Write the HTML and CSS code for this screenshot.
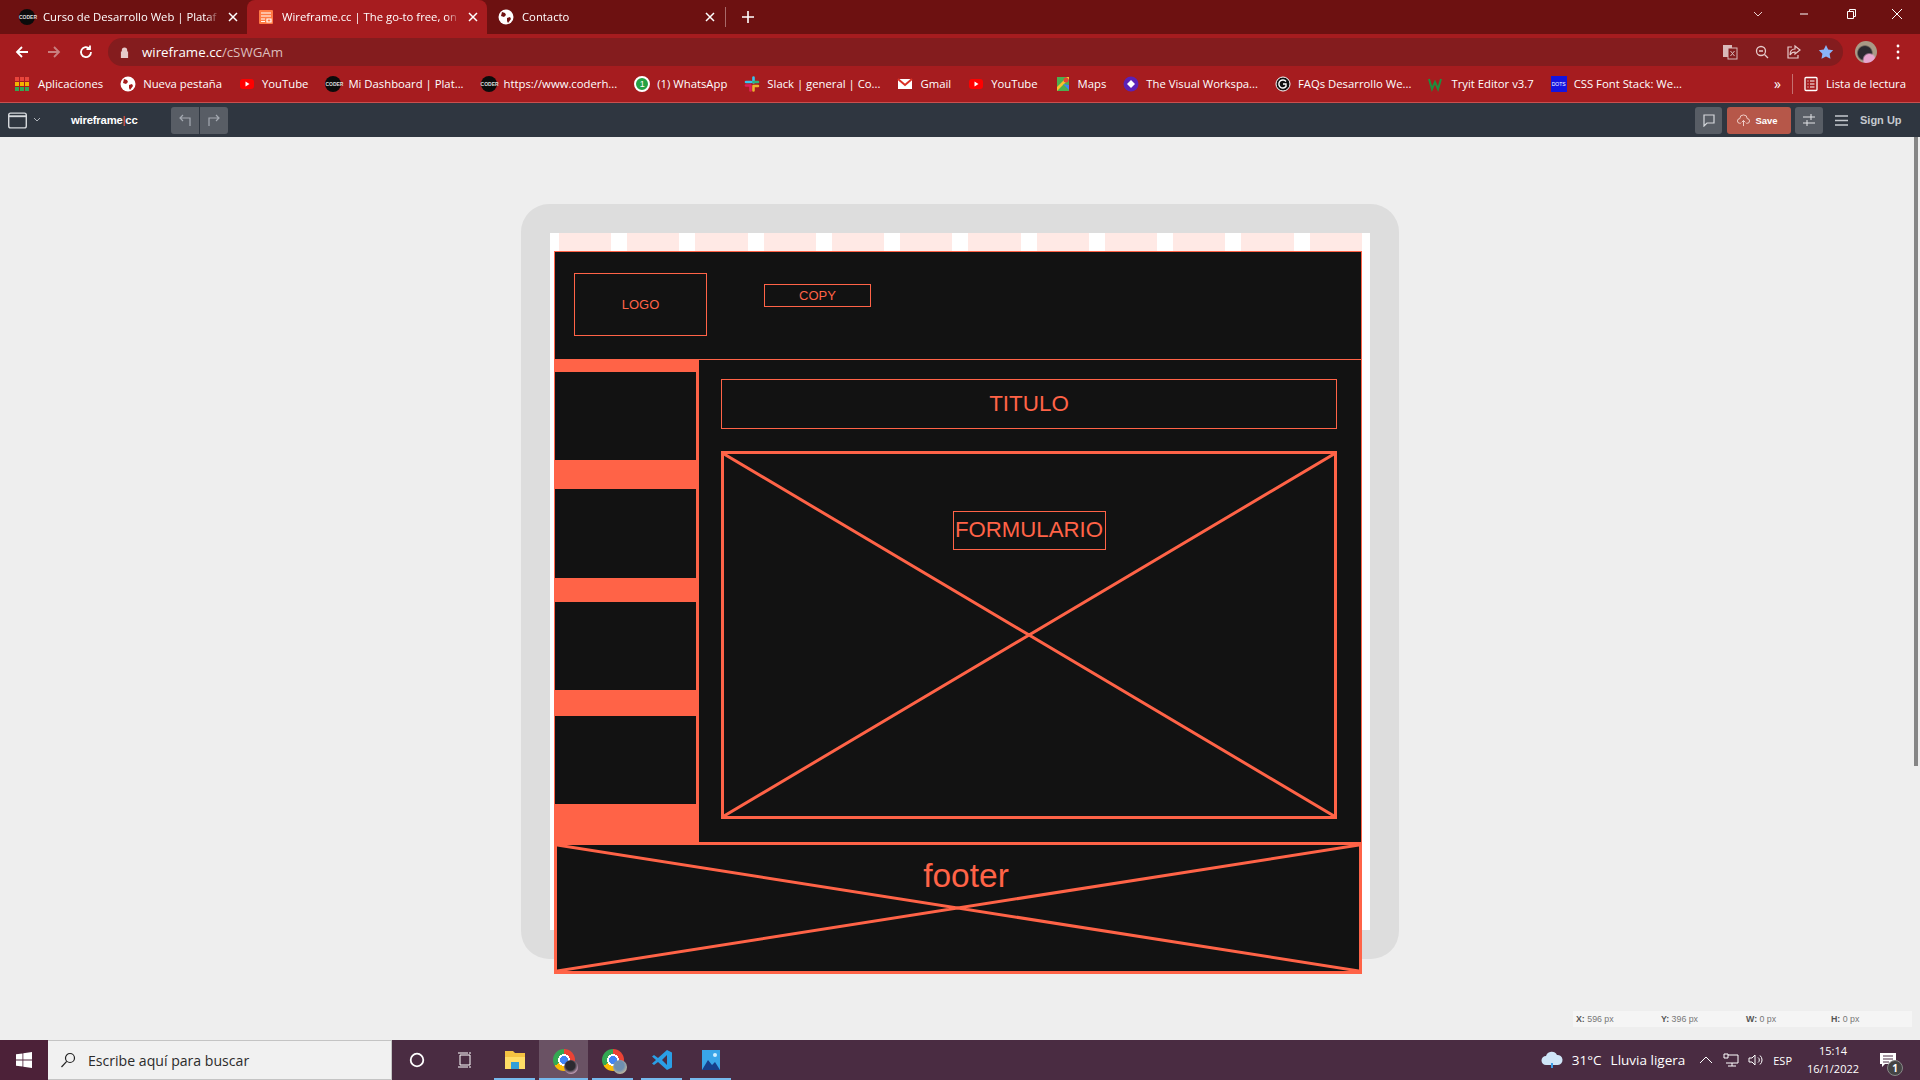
FILE: index.html
```html
<!DOCTYPE html>
<html lang="en">
<head>
    <meta charset="UTF-8">
    <title>Wireframe.cc</title>
    <link rel="stylesheet" href="styles.css">
</head>
<body>

<div class="tabstrip">
    <div class="tab tab-first">
        <span class="fav fav-coder">CODER</span>
        <span class="tab-title">Curso de Desarrollo Web | Plataf</span>
        <svg class="tab-x" viewBox="0 0 10 10"><path d="M1 1l8 8M9 1L1 9"/></svg>
    </div>
    <div class="tab tab-active">
        <svg class="fav-svg" viewBox="0 0 16 16"><rect x="1" y="1" width="14" height="14" rx="1" fill="#ff7a45"/><path d="M3 4h10M3 7h10M3 10h4M3 12.5h4M9 10h4v3H9z" stroke="#fff" stroke-width="1.2" fill="none"/></svg>
        <span class="tab-title">Wireframe.cc | The go-to free, on</span>
        <svg class="tab-x" viewBox="0 0 10 10"><path d="M1 1l8 8M9 1L1 9"/></svg>
    </div>
    <div class="tab tab-last">
        <svg class="fav-svg" viewBox="0 0 16 16"><circle cx="8" cy="8" r="7.5" fill="#fff"/><path d="M4 3l3 1 1 2-2 2-3-1zM9 9l3-1 1 2-3 4-1-2z" fill="#6f1212"/></svg>
        <span class="tab-title">Contacto</span>
        <svg class="tab-x" viewBox="0 0 10 10"><path d="M1 1l8 8M9 1L1 9"/></svg>
    </div>
    <span class="tab-sep"></span>
    <svg class="tab-new" viewBox="0 0 12 12"><path d="M6 0v12M0 6h12"/></svg>
    <div class="win-btns">
        <svg viewBox="0 0 12 12"><path d="M2 4l4 4 4-4" stroke="#e8d0d0" fill="none"/></svg>
        <svg viewBox="0 0 12 12"><path d="M2 6h8" stroke="#fff" fill="none"/></svg>
        <svg viewBox="0 0 12 12"><path d="M2.5 3.5h6v7h-6zM4.500 3.500v-2h6v7h-2" stroke="#fff" fill="none"/></svg>
        <svg viewBox="0 0 12 12"><path d="M1 1l10 10M11 1L1 11" stroke="#fff" fill="none"/></svg>
    </div>
</div>

<div class="addressbar">
    <svg class="nav-ico" viewBox="0 0 16 16"><path d="M14 8H3M8 3L3 8l5 5" stroke="#fff" stroke-width="1.8" fill="none"/></svg>
    <svg class="nav-ico" viewBox="0 0 16 16"><path d="M2 8h11M8 3l5 5-5 5" stroke="#c98080" stroke-width="1.8" fill="none"/></svg>
    <svg class="nav-ico" viewBox="0 0 16 16"><path d="M13 8a5 5 0 1 1-1.500-3.500M12 1.500V5H8.500" stroke="#fff" stroke-width="1.8" fill="none"/></svg>
    <div class="omnibox">
        <svg class="lock" viewBox="0 0 10 12"><path d="M2 5V3.500a3 3 0 0 1 6 0V5h1v7H1V5z" fill="#e6caca"/></svg>
        <span class="url">wireframe.cc<span class="url-path">/cSWGAm</span></span>
        <div class="omni-icons">
            <svg viewBox="0 0 16 16"><rect x="1" y="1" width="9" height="12" fill="#d9b9b9"/><rect x="6" y="4" width="9" height="11" fill="#841c1e" stroke="#d9b9b9"/><path d="M8.500 7l4 5M12.500 7l-4 5" stroke="#d9b9b9"/></svg>
            <svg viewBox="0 0 16 16"><circle cx="7" cy="7" r="4.500" stroke="#e6caca" stroke-width="1.3" fill="none"/><path d="M10.500 10.500L14 14M5 7h4" stroke="#e6caca" stroke-width="1.3"/></svg>
            <svg viewBox="0 0 16 16"><path d="M6 3H2v11h10v-3M9 2l5 4-5 4V8c-3 0-4 1-5 3 0-4 2-6 5-6z" stroke="#e6caca" stroke-width="1.2" fill="none"/></svg>
            <svg viewBox="0 0 16 16"><path d="M8 1l2.200 4.600 5 .7-3.600 3.500.9 5L8 12.400l-4.500 2.400.9-5L.8 6.300l5-.7z" fill="#8ab4f8"/></svg>
        </div>
    </div>
    <span class="avatar"></span>
    <svg class="menu-dots" viewBox="0 0 4 16"><circle cx="2" cy="2" r="1.4" fill="#fff"/><circle cx="2" cy="8" r="1.4" fill="#fff"/><circle cx="2" cy="14" r="1.4" fill="#fff"/></svg>
</div>

<div class="bookmarks">
    <div class="bm bm-apps"><span class="apps"></span>Aplicaciones</div>
    <div class="bm"><svg class="fav-svg" viewBox="0 0 16 16"><circle cx="8" cy="8" r="7.5" fill="#fff"/><path d="M4 3l3 1 1 2-2 2-3-1zM9 9l3-1 1 2-3 4-1-2z" fill="#a61c1c"/></svg>Nueva pestaña</div>
    <div class="bm"><svg class="fav-svg" viewBox="0 0 16 16"><rect x="1" y="3" width="14" height="10" rx="3" fill="#f00"/><path d="M6.500 5.500v5l4-2.500z" fill="#fff"/></svg>YouTube</div>
    <div class="bm"><span class="fav fav-coder">CODER</span>Mi Dashboard | Plat...</div>
    <div class="bm"><span class="fav fav-coder">CODER</span>https://www.coderh...</div>
    <div class="bm"><span class="fav fav-wa">1</span>(1) WhatsApp</div>
    <div class="bm"><svg class="fav-svg" viewBox="0 0 16 16"><path d="M2 6h5M9.500 1.500v5" stroke="#36c5f0" stroke-width="2.6" stroke-linecap="round"/><path d="M9.500 6H14" stroke="#2eb67d" stroke-width="2.6" stroke-linecap="round"/><path d="M6.500 9.500v5" stroke="#e01e5a" stroke-width="2.6" stroke-linecap="round"/><path d="M2 9.500h4" stroke="#e01e5a" stroke-width="2.6" stroke-linecap="round"/><path d="M9.500 10H14M9.500 10v4.500" stroke="#ecb22e" stroke-width="2.6" stroke-linecap="round"/></svg>Slack | general | Co...</div>
    <div class="bm"><svg class="fav-svg" viewBox="0 0 16 16"><rect x="1" y="3" width="14" height="10" fill="#fff"/><path d="M1 3l7 6 7-6" stroke="#d93025" stroke-width="2" fill="none"/></svg>Gmail</div>
    <div class="bm"><svg class="fav-svg" viewBox="0 0 16 16"><rect x="1" y="3" width="14" height="10" rx="3" fill="#f00"/><path d="M6.500 5.500v5l4-2.500z" fill="#fff"/></svg>YouTube</div>
    <div class="bm"><svg class="fav-svg" viewBox="0 0 16 16"><rect x="2" y="1" width="12" height="14" fill="#4caf50"/><path d="M2 15L14 3V1h-2L2 11z" fill="#fbc02d"/><path d="M8 8l6 6V9z" fill="#4285f4"/><circle cx="11" cy="4" r="2.500" fill="#ea4335"/></svg>Maps</div>
    <div class="bm"><svg class="fav-svg" viewBox="0 0 16 16"><circle cx="8" cy="8" r="7.5" fill="#5b21b6"/><path d="M8 4l4 4-4 4-4-4z" fill="#fff"/></svg>The Visual Workspa...</div>
    <div class="bm"><svg class="fav-svg" viewBox="0 0 16 16"><circle cx="8" cy="8" r="7" fill="#111" stroke="#fff"/><path d="M11 5.500a4 4 0 1 0 0 5V8H8" stroke="#fff" stroke-width="1.4" fill="none"/></svg>FAQs Desarrollo We...</div>
    <div class="bm"><svg class="fav-svg" viewBox="0 0 16 16"><path d="M1 3l3 10 3-7 3 7 3-10" stroke="#1e8e3e" stroke-width="2" fill="none"/></svg>Tryit Editor v3.7</div>
    <div class="bm"><span class="fav fav-dots">DOTS</span>CSS Font Stack: We...</div>
    <span class="bm-more">»</span>
    <span class="bm-sep"></span>
    <div class="bm bm-read"><svg class="fav-svg" viewBox="0 0 16 16"><rect x="2" y="1.500" width="12" height="13" rx="1" stroke="#fff" stroke-width="1.3" fill="none"/><path d="M4.500 5h1M7 5h4.500M4.500 8h1M7 8h4.500M4.500 11h1M7 11h4.500" stroke="#fff"/></svg>Lista de lectura</div>
</div>

<div class="toolbar">
    <svg class="page-ico" viewBox="0 0 20 17"><rect x=".75" y=".75" width="18.5" height="15.5" rx="2" stroke="#d5d8dc" stroke-width="1.5" fill="none"/><path d="M1 4h18" stroke="#d5d8dc" stroke-width="2"/></svg>
    <svg class="caret" viewBox="0 0 8 6"><path d="M1 1l3 3 3-3" stroke="#aeb3ba" fill="none"/></svg>
    <span class="brand">wireframe<span class="brand-bar">|</span>cc</span>
    <div class="undo-group">
        <span class="tool-btn"><svg viewBox="0 0 14 14"><path d="M12 13V5H2M5 2L2 5l3 3" stroke="#a5aab2" stroke-width="1.2" fill="none"/></svg></span>
        <span class="tool-btn"><svg viewBox="0 0 14 14"><path d="M2 13V5h10M9 2l3 3-3 3" stroke="#a5aab2" stroke-width="1.2" fill="none"/></svg></span>
    </div>
    <div class="toolbar-right">
        <span class="tool-btn tool-single tool-chat"><svg viewBox="0 0 14 14"><path d="M2 2h10v8H5l-3 3z" stroke="#d5d8dc" stroke-width="1.2" fill="none"/></svg></span>
        <span class="save-btn"><svg viewBox="0 0 14 14"><path d="M4 10H3a2.500 2.500 0 0 1 0-5 4 4 0 0 1 8 0 2.500 2.500 0 0 1 0 5h-1M7 13V7M5 9l2-2 2 2" stroke="#f3d6d0" fill="none"/></svg>Save</span>
        <span class="tool-btn tool-single"><svg viewBox="0 0 14 14"><path d="M1 4h12M1 10h12M9 1v6M5 7v6" stroke="#e2e4e7" fill="none"/></svg></span>
        <svg class="burger" viewBox="0 0 13 11"><path d="M0 1h13M0 5.500h13M0 10h13" stroke="#c5c9ce" stroke-width="1.4"/></svg>
        <span class="signup">Sign Up</span>
    </div>
</div>

<div class="workspace">
    <div class="canvas">
        <div class="device">
            <div class="stripes"></div>
            <div class="wire">
                <div class="wire-header">
                    <div class="box logo-box">LOGO</div>
                    <div class="box copy-box">COPY</div>
                </div>
                <div class="wire-middle">
                    <div class="sidebar">
                        <div class="side-item"></div>
                        <div class="side-item side-item-2"></div>
                        <div class="side-item side-item-3"></div>
                        <div class="side-item side-item-4"></div>
                    </div>
                    <div class="content">
                        <div class="box title-box">TITULO</div>
                        <div class="cross form-box">
                            <svg class="cross-lines" viewBox="0 0 100 100" preserveAspectRatio="none"><path d="M0 0L100 100M100 0L0 100" vector-effect="non-scaling-stroke"/></svg>
                            <div class="box form-label">FORMULARIO</div>
                        </div>
                    </div>
                </div>
                <div class="cross wire-footer">
                    <svg class="cross-lines" viewBox="0 0 100 100" preserveAspectRatio="none"><path d="M0 0L100 100M100 0L0 100" vector-effect="non-scaling-stroke"/></svg>
                    <span class="footer-label">footer</span>
                </div>
            </div>
        </div>
        <div class="coords">
            <span><b>X:</b> 596 px</span>
            <span><b>Y:</b> 396 px</span>
            <span><b>W:</b> 0 px</span>
            <span><b>H:</b> 0 px</span>
        </div>
    </div>
    <div class="scrollbar"><div class="scroll-thumb"></div></div>
</div>

<div class="taskbar">
    <span class="start"><svg viewBox="0 0 16 16"><path d="M0 2.300l6.500-.9v6.200H0zM7.300 1.300L16 0v7.600H7.300zM0 8.400h6.500v6.200L0 13.700zM7.300 8.400H16V16l-8.700-1.300z" fill="#fff"/></svg></span>
    <div class="searchbox">
        <svg viewBox="0 0 16 16"><circle cx="10" cy="6" r="4.500" stroke="#222" stroke-width="1.2" fill="none"/><path d="M6.700 9.300L1.500 15" stroke="#222" stroke-width="1.2"/></svg>
        <span>Escribe aquí para buscar</span>
    </div>
    <div class="task-icons">
        <span class="task task-small"><svg viewBox="0 0 16 16"><circle cx="8" cy="8" r="6.300" stroke="#fff" stroke-width="1.8" fill="none"/></svg></span>
        <span class="task task-small"><svg viewBox="0 0 16 16"><path d="M3 3h10v10H3zM1 1h10M1 15h10M13 0v2M13 14v2" stroke="#fff" fill="none"/></svg></span>
        <span class="task task-open task-folder"><svg class="big" viewBox="0 0 22 22"><path d="M1 2h8l2 2h10v16H1z" fill="#f5c342"/><path d="M1 8h20v12H1z" fill="#ffdd66"/><rect x="7" y="13" width="8" height="7" fill="#2f9fd8"/></svg></span>
        <span class="task task-open task-current"><span class="chrome"></span></span>
        <span class="task task-open"><span class="chrome chrome-alt"></span></span>
        <span class="task task-open"><svg class="big" viewBox="0 0 22 22"><path d="M16 1l5 2.500v15L16 21 7 13l-4 3-2-1.500L5 11 1 7.500 3 6l4 3z" fill="#2a9fe6"/><path d="M16 6l-5 5 5 5z" fill="#4a2c42"/></svg></span>
        <span class="task task-open"><svg class="big" viewBox="0 0 22 22"><rect x="2" y="1" width="18" height="20" fill="#39a5e8"/><path d="M2 21l6-10 4 5 3-3 5 8z" fill="#173f8a"/><circle cx="15" cy="6" r="2" fill="#cfefff"/></svg></span>
    </div>
    <div class="tray">
        <svg class="cloud" viewBox="0 0 22 18"><path d="M5 14a4.500 4.500 0 0 1 0-9 6 6 0 0 1 11-1 5 5 0 0 1 1 10z" fill="#cfe6f8"/><path d="M11 12v5" stroke="#3a9ce8" stroke-width="2"/></svg>
        <span class="weather">31°C</span>
        <span class="weather-text">Lluvia ligera</span>
        <svg class="tray-ico" viewBox="0 0 14 14"><path d="M1 10l6-6 6 6" stroke="#fff" fill="none"/></svg>
        <svg class="tray-ico" viewBox="0 0 16 14"><path d="M5 2h10v8H3M9 10v3M5 13h8M1 1h4v4H1z" stroke="#fff" fill="none"/></svg>
        <svg class="tray-ico" viewBox="0 0 16 14"><path d="M1 5h3l3-3v10L4 9H1zM10 4.500a3 3 0 0 1 0 5M12 2.500a6 6 0 0 1 0 9" stroke="#fff" fill="none"/></svg>
        <span class="lang">ESP</span>
        <span class="clock">15:14<br>16/1/2022</span>
        <span class="notif"><svg viewBox="0 0 16 14"><path d="M0 0h16v11H5l-3 3v-3H0z" fill="#fff"/><path d="M3 3h10M3 6h10M3 9h6" stroke="#4a2c42"/></svg><span class="notif-count">1</span></span>
    </div>
</div>

</body>
</html>
```

FILE: styles.css
```css
*{
    box-sizing: border-box;
}
html,body{
    margin: 0;
    height: 100%;
}
body{
    width: 1920px;
    height: 1080px;
    overflow: hidden;
    display: flex;
    flex-direction: column;
    font-family: "Liberation Sans", Arial, sans-serif;
    background: #eee;
}

/* browser chrome */
.tabstrip{
    height: 34px;
    flex: none;
    display: flex;
    align-items: flex-end;
    background: #6d1111;
    padding-left: 8px;
    color: #fff;
    font-family: "Open Sans", "Noto Sans", sans-serif;
    font-size: 11.3px;
}
.tab{
    width: 240px;
    height: 34px;
    display: flex;
    align-items: center;
    padding: 0 9px 0 11px;
    gap: 8px;
    border-radius: 8px 8px 0 0;
}
.tab-first{
    width: 239px;
}
.tab-last{
    padding-right: 12px;
}
.tab-active{
    background: #a61c1f;
}
.tab-title{
    flex: 1;
    min-width: 0;
    padding-bottom: 1px;
    white-space: nowrap;
    -webkit-mask-image: linear-gradient(to left, transparent 0, #000 14px);
    mask-image: linear-gradient(to left, transparent 0, #000 14px);
}
.tab-x{
    width: 10px;
    height: 10px;
    flex: none;
}
.tab-x path{
    stroke: #fff;
    stroke-width: 1.5;
    fill: none;
}
.tab-sep{
    width: 1px;
    height: 20px;
    background: #a86a6a;
    margin: 0 0 7px -2px;
}
.tab-new{
    width: 12px;
    height: 12px;
    margin: 0 0 11px 16px;
}
.tab-new path{
    stroke: #fff;
    stroke-width: 1.6;
}
.win-btns{
    margin-left: auto;
    display: flex;
    align-items: center;
    height: 28px;
    align-self: flex-start;
    gap: 34.5px;
    padding-right: 17px;
}
.win-btns svg{
    width: 12px;
    height: 12px;
}
.addressbar{
    height: 36px;
    flex: none;
    background: #a61c1f;
    display: flex;
    align-items: center;
    padding-left: 14px;
    gap: 16px;
}
.nav-ico{
    width: 16px;
    height: 16px;
}
.omnibox{
    width: 1735px;
    height: 28px;
    flex: none;
    margin-left: -2px;
    border-radius: 14px;
    background: #841c1e;
    display: flex;
    align-items: center;
    padding-left: 12px;
    color: #fff;
    font-family: "Open Sans", "Noto Sans", sans-serif;
    font-size: 13.3px;
}
.lock{
    width: 9px;
    height: 11px;
    margin-right: 13px;
}
.url-path{
    color: #dcbcbc;
}
.omni-icons{
    margin-left: auto;
    display: flex;
    gap: 16px;
    padding-right: 9px;
}
.omni-icons svg{
    width: 16px;
    height: 16px;
}
.avatar{
    width: 22px;
    height: 22px;
    flex: none;
    margin-left: -4px;
    border-radius: 50%;
    background:
        radial-gradient(circle at 65% 85%, #e7a6cf 0 22%, transparent 30%),
        radial-gradient(circle at 45% 55%, #2c2a30 0 38%, transparent 48%),
        #a99a86;
}
.menu-dots{
    width: 4px;
    height: 16px;
    flex: none;
    margin-left: 3px;
}
.bookmarks{
    height: 33px;
    flex: none;
    background: #a61c1f;
    border-bottom: 1px solid #c8504f;
    display: flex;
    align-items: center;
    padding: 0 0 5px 15px;
    color: #fff;
    font-family: "Open Sans", "Noto Sans", sans-serif;
    font-size: 11.3px;
    white-space: nowrap;
}
.bm{
    display: flex;
    align-items: center;
    gap: 7px;
    margin-right: 17px;
}
.bm-apps{
    gap: 9px;
}
.bm-more{
    font-size: 14px;
    margin-left: auto;
    margin-right: 11px;
}
.bm-sep{
    width: 1px;
    height: 20px;
    background: #c57070;
    margin-right: 10px;
}
.bm-read{
    margin-right: 14px;
}
.fav-svg{
    width: 16px;
    height: 16px;
    flex: none;
}
.fav{
    width: 16px;
    height: 16px;
    flex: none;
    display: block;
    border-radius: 50%;
    text-align: center;
    font-family: "Liberation Sans", sans-serif;
}
.fav-coder{
    background: #0b0b0b;
    color: #ddd;
    font-size: 5px;
    font-weight: bold;
    line-height: 16px;
}
.fav-wa{
    background: #25a244;
    border: 2px solid #fff;
    color: #fff;
    font-size: 9px;
    line-height: 12px;
}
.fav-dots{
    background: #1414e0;
    color: #fff;
    border-radius: 0;
    font-size: 5px;
    line-height: 16px;
}
.apps{
    width: 14px;
    height: 14px;
    flex: none;
    background:
        linear-gradient(#e8453c 0 4px, transparent 4px 5px, #f4b400 5px 9px, transparent 9px 10px, #34a853 10px);
    -webkit-mask: repeating-linear-gradient(to right, #000 0 4px, transparent 4px 5px);
    mask: repeating-linear-gradient(to right, #000 0 4px, transparent 4px 5px);
}

/* wireframe.cc toolbar */
.toolbar{
    height: 34px;
    flex: none;
    background: #2f3640;
    display: flex;
    align-items: center;
    padding-left: 8px;
}
.page-ico{
    width: 19px;
    height: 17px;
}
.caret{
    width: 8px;
    height: 6px;
    margin-left: 6px;
}
.brand{
    margin-left: 30px;
    color: #fff;
    font-size: 11.3px;
    font-weight: bold;
    letter-spacing: -.2px;
    width: 100px;
}
.brand-bar{
    color: #ff6347;
    font-weight: normal;
}
.undo-group{
    display: flex;
    gap: 1px;
}
.tool-btn{
    width: 28px;
    height: 27px;
    display: flex;
    align-items: center;
    justify-content: center;
    background: #585d65;
}
.tool-btn svg{
    width: 14px;
    height: 14px;
}
.undo-group .tool-btn:first-child{
    border-radius: 3px 0 0 3px;
}
.undo-group .tool-btn:last-child{
    border-radius: 0 3px 3px 0;
}
.toolbar-right{
    margin-left: auto;
    display: flex;
    align-items: center;
    padding-right: 19px;
}
.tool-single{
    border-radius: 3px;
}
.tool-chat{
    width: 27px;
}
.save-btn{
    width: 64px;
    height: 27px;
    margin: 0 4px 0 5px;
    padding-right: 3px;
    background: #b65749;
    border-radius: 3px;
    color: #fff;
    font-size: 9.5px;
    font-weight: bold;
    display: flex;
    align-items: center;
    justify-content: center;
    gap: 5px;
}
.save-btn svg{
    width: 13px;
    height: 13px;
}
.burger{
    width: 13px;
    height: 11px;
    margin-left: 12px;
}
.signup{
    margin-left: 12px;
    width: 41px;
    white-space: nowrap;
    color: #c5c9ce;
    font-size: 11px;
    font-weight: bold;
}

/* workspace */
.workspace{
    flex: 1;
    display: flex;
    min-height: 0;
    background: #eee;
}
.canvas{
    flex: 1;
    position: relative;
}
.scrollbar{
    width: 6px;
    background: #eee;
}
.scroll-thumb{
    width: 4px;
    height: 629px;
    background: #858585;
}
.device{
    width: 878px;
    height: 755px;
    margin: 67px 0 0 521px;
    border: 29px solid #ddd;
    border-radius: 28px;
    background: #fff;
}
.stripes{
    height: 18px;
    background: repeating-linear-gradient(to right, #ffe9e5 0 52.25px, #fff 52.25px 68.25px);
    margin-left: 9px;
    margin-right: 8px;
}

/* the wireframe drawn on the canvas */
.wire{
    width: 808px;
    margin-left: 4px;
    background: #121212;
    color: #ff6347;
    position: relative;
}
.wire-header{
    height: 109px;
    border: 1px solid #ff6347;
    padding: 21px 0 0 19px;
    display: flex;
    align-items: flex-start;
    gap: 57px;
}
.box{
    border: 1px solid #ff6347;
    display: flex;
    align-items: center;
    justify-content: center;
}
.logo-box{
    width: 133px;
    height: 63px;
    font-size: 13px;
}
.copy-box{
    width: 107px;
    height: 23px;
    margin-top: 11px;
    font-size: 13px;
}
.wire-middle{
    height: 482px;
    display: flex;
    border-right: 1px solid #ff6347;
}
.sidebar{
    width: 145px;
    height: 485px;
    flex: none;
    background: #ff6347;
    padding-top: 12px;
    padding-right: 3px;
    padding-left: 1px;
}
.side-item{
    height: 88px;
    background: #121212;
    margin-bottom: 29px;
}
.side-item-2{
    height: 89px;
    margin-bottom: 24px;
}
.side-item-3{
    margin-bottom: 26px;
}
.content{
    flex: 1;
    padding: 19px 24px 0 22px;
}
.title-box{
    height: 50px;
    font-size: 22.4px;
}
.cross{
    border: 3px solid #ff6347;
    position: relative;
}
.cross-lines{
    position: absolute;
    left: 0;
    top: 0;
    width: 100%;
    height: 100%;
}
.cross-lines path{
    stroke: #ff6347;
    stroke-width: 3px;
    fill: none;
}
.form-box{
    height: 368px;
    margin-top: 22px;
    display: flex;
    justify-content: center;
    align-items: flex-start;
    padding-top: 57px;
}
.form-label{
    position: relative;
    width: 153px;
    height: 39px;
    padding-bottom: 1px;
    font-size: 22.2px;
    background: #121212;
}
.wire-footer{
    height: 132px;
    display: flex;
    justify-content: center;
    background: #121212;
}
.footer-label{
    position: relative;
    font-size: 33.5px;
    line-height: 37px;
    margin: 12px 0 0 16px;
}
.coords{
    position: absolute;
    right: 2px;
    top: 874px;
    width: 339px;
    height: 16px;
    background: #f5f5f5;
    color: #777;
    font-size: 8.8px;
    line-height: 16px;
    padding-left: 3px;
    display: grid;
    grid-template-columns: repeat(4, 85px);
}
.coords b{
    color: #555;
}

/* windows taskbar */
.taskbar{
    height: 40px;
    background: #4a2c42;
    display: flex;
    align-items: center;
    flex: none;
    color: #fff;
}
.start{
    width: 48px;
    height: 40px;
    display: flex;
    align-items: center;
    justify-content: center;
    background: #4c2138;
}
.start svg{
    width: 16px;
    height: 16px;
}
.searchbox{
    width: 344px;
    height: 40px;
    flex: none;
    background: #f1f1f1;
    border: 1px solid #c4c4c4;
    border-width: 1px 1px 1px 0;
    display: flex;
    align-items: center;
    padding-left: 12px;
    gap: 12px;
    color: #2b2b2b;
    font-family: "Open Sans", "Noto Sans", sans-serif;
    font-size: 14.1px;
}
.searchbox svg{
    width: 16px;
    height: 16px;
}
.task-icons{
    display: flex;
    margin-left: 1px;
}
.task{
    width: 49px;
    height: 40px;
    display: flex;
    align-items: center;
    justify-content: center;
}
.task-small{
    width: 48px;
}
.task-folder{
    margin-left: 1px;
}
.task svg{
    width: 16px;
    height: 16px;
}
.task svg.big{
    width: 22px;
    height: 22px;
}
.task-open{
    background: linear-gradient(#76b9ed, #76b9ed) center bottom/41px 2px no-repeat;
}
.task-current{
    background: linear-gradient(#76b9ed, #76b9ed) center bottom/100% 2px no-repeat, #6a5264;
}
.chrome{
    width: 22px;
    height: 22px;
    position: relative;
    border-radius: 50%;
    background:
        radial-gradient(circle, #4285f4 0 4px, #fff 4px 6px, transparent 6px),
        conic-gradient(#ea4335 0 33%, #fbbc05 33% 66%, #34a853 66%);
}
.chrome::after{
    content: "";
    position: absolute;
    right: -3px;
    bottom: -3px;
    width: 14px;
    height: 14px;
    border-radius: 50%;
    background: radial-gradient(circle at 45% 40%, #2c2a30 0 40%, #b998b0 70%);
}
.chrome-alt::after{
    background: radial-gradient(circle at 45% 40%, #6f8fb0 0 40%, #b8b3a0 70%);
}
.tray{
    margin-left: auto;
    display: flex;
    align-items: center;
    font-family: "Open Sans", "Noto Sans", sans-serif;
    font-size: 13.5px;
    height: 40px;
    padding-right: 22px;
}
.cloud{
    width: 22px;
    height: 18px;
    margin-right: 9px;
}
.weather{
    margin-right: 9px;
}
.weather-text{
    margin-right: 13px;
}
.tray-ico{
    width: 16px;
    height: 14px;
    margin-right: 9px;
}
.lang{
    font-size: 11px;
    margin: 0 8px 0 0;
}
.clock{
    font-size: 11px;
    line-height: 18px;
    text-align: center;
    width: 66px;
}
.notif{
    position: relative;
    width: 18px;
    height: 14px;
    margin: 0 0 0 14px;
}
.notif svg{
    width: 16px;
    height: 14px;
    display: block;
}
.notif-count{
    position: absolute;
    left: 7px;
    top: 7px;
    width: 16px;
    height: 16px;
    border-radius: 50%;
    border: 1px solid #888;
    background: #444;
    font-size: 10px;
    font-weight: bold;
    line-height: 14px;
    text-align: center;
}
```
